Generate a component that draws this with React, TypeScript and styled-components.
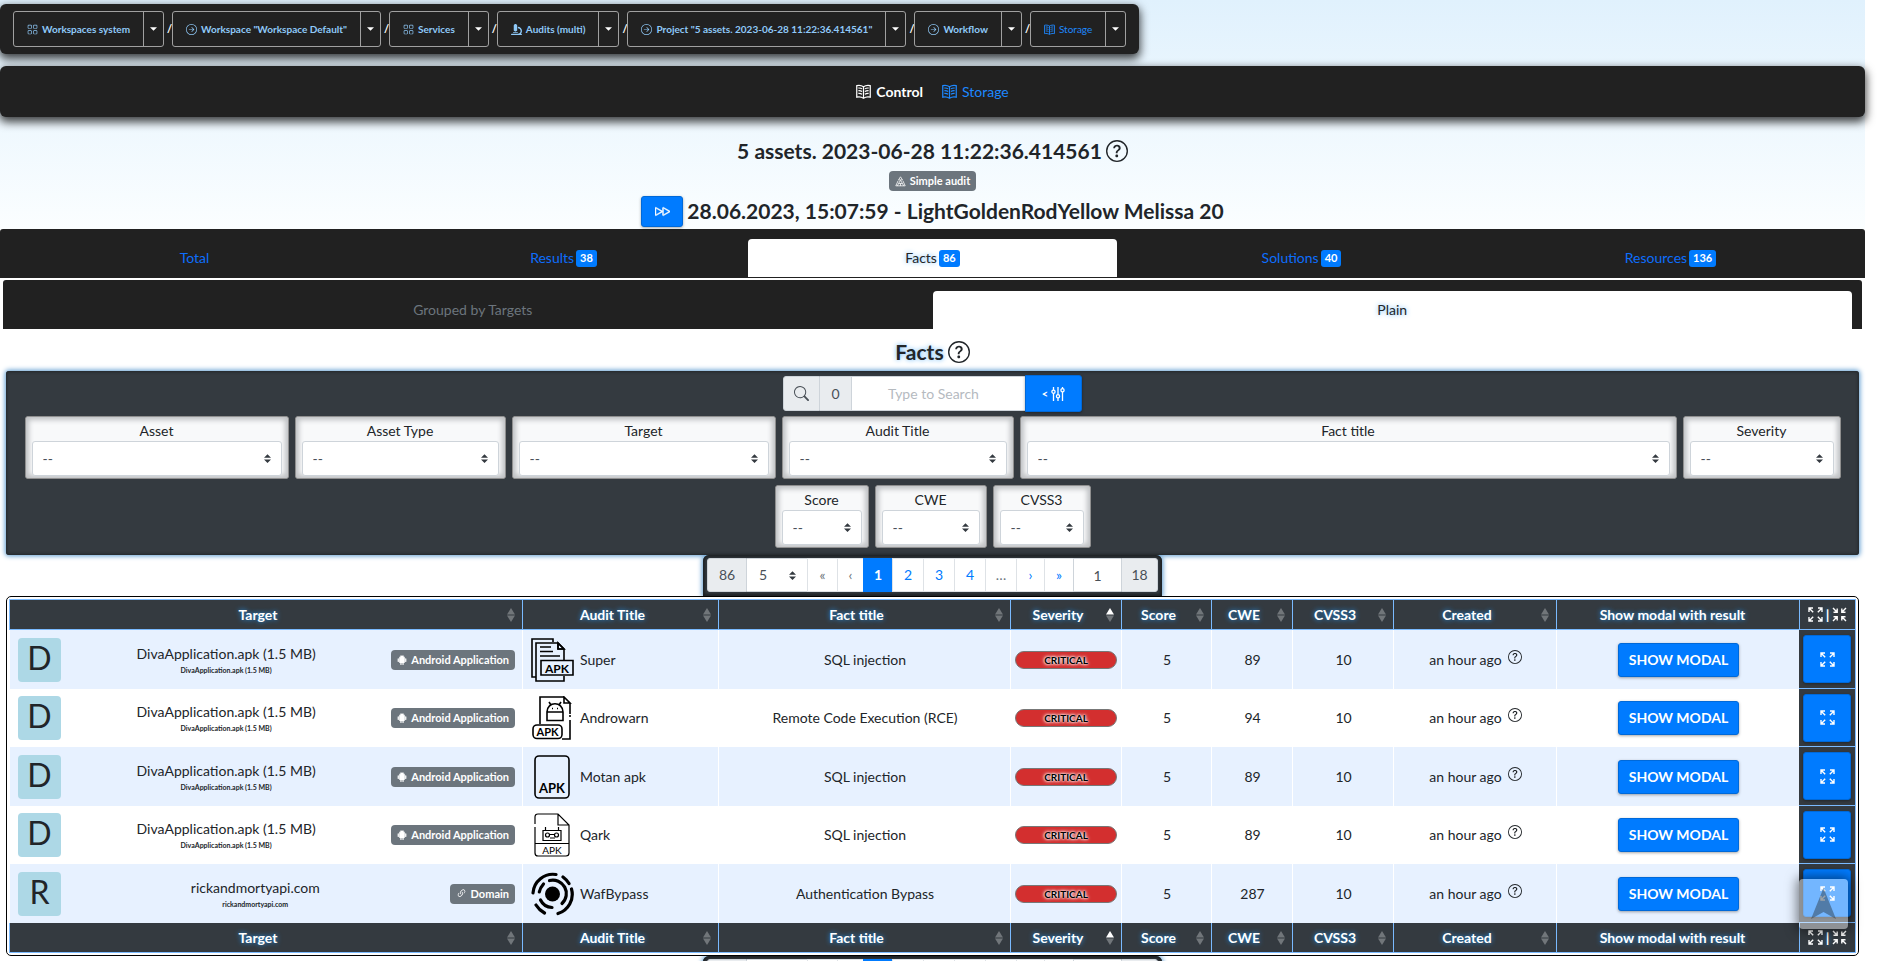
import React from "react";
import styled, { createGlobalStyle, css } from "styled-components";
import {
  BsAndroid2,
  BsArrowRightCircle,
  BsFastForward,
  BsGrid,
  BsLink45Deg,
  BsQuestionCircle,
  BsSearch,
} from "react-icons/bs";
import { FaMicroscope } from "react-icons/fa";

const GlobalStyle = createGlobalStyle`
  *, *::before, *::after { box-sizing: border-box; }
  body {
    margin: 0;
    background: #fff;
    color: #212529;
    font-family: Lato, "Open Sans", sans-serif;
    font-size: 14px;
    line-height: 20px;
  }
  button, input, select { font: inherit; color: inherit; margin: 0; }
  a { text-decoration: none; color: inherit; }
  svg { display: block; flex: none; }
`;

const Shell = styled.div`
  height: 100vh;
  overflow-y: auto;
  scrollbar-width: none;
  padding-right: 12px;
`;

const Top = styled.div`
  padding-top: 4px;
  background: linear-gradient(#e0f1fd, #fbfeff);
`;

const Dark = styled.nav`
  display: flex;
  align-items: center;
  background: #212121;
  border-radius: 6px;
  box-shadow: 0 4px 10px 1px rgba(0, 0, 0, 0.75);
`;

const Crumbs = styled(Dark)`
  width: fit-content;
  height: 50px;
  padding: 0 13px;
  color: #fff;
`;

const Slash = styled.span`
  width: 8px;
  padding-left: 3px;
  font-size: 11px;
  font-weight: 700;
`;

const CrumbGroup = styled.div`
  display: flex;
  height: 36px;
  border: 1px solid #a0a0a0;
  border-radius: 3px;
`;

const CrumbLink = styled.a<{ $current?: boolean }>`
  display: flex;
  align-items: center;
  gap: 4px;
  padding: 0 13px;
  font-size: 10px;
  font-weight: ${(p) => (p.$current ? 400 : 700)};
  color: ${(p) => (p.$current ? "#1e88ff" : "#90caf9")};
`;

const Caret = styled.button`
  width: 20px;
  padding: 0;
  display: flex;
  align-items: center;
  justify-content: center;
  background: none;
  border: 0;
  border-left: 1px solid #a0a0a0;
`;

const ServiceBar = styled(Dark)`
  justify-content: center;
  gap: 19px;
  height: 51px;
  margin-top: 12px;
`;

const ServiceLink = styled.a<{ $current?: boolean }>`
  display: flex;
  align-items: center;
  gap: 5px;
  font-size: 14px;
  font-weight: ${(p) => (p.$current ? 400 : 700)};
  color: ${(p) => (p.$current ? "#1e88ff" : "#fff")};
`;

const Headline = styled.header`
  display: flex;
  flex-direction: column;
  align-items: center;
  gap: 5px;
  padding: 19px 0 3px;
`;

const Title = styled.h1<{ $glow?: boolean }>`
  display: flex;
  align-items: center;
  gap: 4px;
  height: 30px;
  margin: 0;
  font-size: 21px;
  line-height: 30px;
  font-weight: 700;
  ${(p) => p.$glow && css`text-shadow: 0 0 5px #64b5f6;`}
`;

const Tag = styled.span`
  display: inline-flex;
  align-items: center;
  gap: 4px;
  height: 20px;
  padding: 0 6px;
  border-radius: 4px;
  background: #6c757d;
  color: #fff;
  font-size: 11px;
  font-weight: 700;
  white-space: nowrap;
`;

const Primary = styled.button`
  display: inline-flex;
  align-items: center;
  justify-content: center;
  border: 1px solid #0069d9;
  border-radius: 3px;
  background: #007bff;
  color: #fff;
  box-shadow: 0 1px 3px rgba(0, 0, 0, 0.35);
`;

const RunButton = styled(Primary)`
  width: 42px;
  height: 31px;
`;

const Tabs = styled.nav<{ $inner?: boolean }>`
  display: flex;
  margin: ${(p) => (p.$inner ? "2px 3px 0" : "0")};
  padding: ${(p) => (p.$inner ? "11px 10px 0" : "10px 10px 1px")};
  background: #212121;
  border-radius: 3px 3px 0 0;
`;

const Tab = styled.a<{ $active?: boolean; $muted?: boolean }>`
  flex: 1 1 0;
  display: flex;
  align-items: center;
  justify-content: center;
  gap: 2px;
  height: 38px;
  border-radius: 4px 4px 0 0;
  font-size: 14px;
  color: ${(p) => (p.$muted ? "#6c757d" : "#0d6efd")};
  ${(p) =>
    p.$active &&
    css`
      background: #fff;
      color: #212529;
      text-shadow: 0 0 5px #64b5f6;
    `}
`;

const Count = styled.span`
  height: 17px;
  padding: 0 4px;
  border-radius: 3px;
  background: #007bff;
  color: #fff;
  font-size: 11px;
  line-height: 16px;
  font-weight: 700;
  text-shadow: none;
`;

const FactsHead = styled.div`
  display: flex;
  justify-content: center;
  padding: 8px 0 4px;
`;

const FilterPanel = styled.section`
  display: flex;
  flex-direction: column;
  align-items: center;
  gap: 4px;
  margin: 0 6px;
  padding: 4px 8px 7px;
  border-radius: 3px;
  background: #343a40;
  box-shadow: 0 0 5px 1px #5c9bd0, inset 0 0 3px 1px #22272b;
`;

const SearchGroup = styled.div`
  display: flex;
  align-items: center;
  height: 37px;
`;

const Addon = styled.span<{ $w: number; $side?: "left" | "right" }>`
  display: flex;
  align-items: center;
  justify-content: center;
  width: ${(p) => p.$w}px;
  height: 35px;
  background: #e9ecef;
  border: 1px solid #ced4da;
  border-radius: ${(p) =>
    p.$side === "left" ? "3px 0 0 3px" : p.$side === "right" ? "0 3px 3px 0" : "0"};
  color: #495057;
  & + & { border-left: 0; }
`;

const SearchInput = styled.input`
  width: 173px;
  height: 35px;
  padding: 0 20px 0 10px;
  border: 1px solid #ced4da;
  border-width: 1px 0;
  text-align: center;
  background: #fff;
  &::placeholder { color: #b5babf; opacity: 1; }
`;

const FilterToggle = styled(Primary)`
  width: 57px;
  height: 37px;
  gap: 3px;
  border-radius: 0 3px 3px 0;
  font-size: 11px;
  font-weight: 700;
`;

const FilterCards = styled.div`
  display: flex;
  flex-wrap: wrap;
  justify-content: center;
  gap: 6px;
  width: 100%;
`;

const FilterCard = styled.label<{ $w: number }>`
  flex: 0 1 ${(p) => p.$w}px;
  height: 63px;
  padding: 4px 6px 3px;
  border: 1px solid #8f8f8f;
  border-radius: 3px;
  background: #f8f9fa;
  box-shadow: inset 0 0 5px 3px #bfc1c4;
  text-align: center;
`;

const SelectWrap = styled.span<{ $w?: number }>`
  position: relative;
  display: block;
  width: ${(p) => (p.$w ? `${p.$w}px` : "100%")};
  svg {
    position: absolute;
    right: 11px;
    top: 13px;
    pointer-events: none;
  }
`;

const Select = styled.select`
  appearance: none;
  width: 100%;
  height: 35px;
  padding: 0 10px;
  border: 1px solid #ced4da;
  border-radius: 3px;
  background: #fff;
  color: #495057;
`;

const PagerRow = styled.div`
  display: flex;
  justify-content: center;
`;

const PagerBox = styled.nav`
  display: flex;
  padding: 3px 4px 4px;
  border-radius: 6px 6px 0 0;
  background: #343a40;
  box-shadow: 0 0 5px 1px #5c9bd0, inset 0 0 3px 2px #1d2124;
  clip-path: inset(0 -8px 0 -8px);
  ${SelectWrap} select { border-radius: 0; border-width: 1px 0; padding: 0 12px; }
  ${Addon}, ${SelectWrap} select { height: 34px; }
`;

const PageButton = styled.button<{ $w: number; $kind?: "active" | "muted" }>`
  width: ${(p) => p.$w}px;
  height: 34px;
  padding: 0;
  border: 1px solid #dee2e6;
  border-right-width: 0;
  background: #fff;
  color: ${(p) => (p.$kind === "muted" ? "#6c757d" : "#007bff")};
  ${(p) =>
    p.$kind === "active" &&
    css`
      background: #007bff;
      border-color: #007bff;
      color: #fff;
      font-weight: 700;
    `}
`;

const PageInput = styled.input`
  width: 48px;
  height: 34px;
  padding: 0;
  border: 1px solid #ced4da;
  border-right: 0;
  text-align: center;
  color: #495057;
`;

const TableFrame = styled.div`
  position: relative;
  margin: 0 6px;
  padding: 2px;
  border: 1px solid #000;
  border-radius: 5px;
  background: #fff;
`;

const Table = styled.table`
  width: 100%;
  table-layout: fixed;
  border-collapse: separate;
  border-spacing: 0;
`;

const HeadCell = styled.th<{ $plain?: boolean; $foot?: boolean }>`
  height: ${(p) => (p.$foot ? 30 : 31)}px;
  padding: 0 ${(p) => (p.$plain ? 18 : 7)}px 0 7px;
  background: #343a40;
  color: #fff;
  border: 0 solid #7abaff;
  border-left-width: 1px;
  border-bottom-width: 1px;
  border-top-width: ${(p) => (p.$foot ? 0 : 1)}px;
  font-weight: 700;
  text-shadow: 0 0 5px #2196f3;
  white-space: nowrap;
  &:last-child {
    padding: 0;
    border-right-width: 1px;
  }
`;

const HeadInner = styled.div`
  display: flex;
  align-items: center;
  justify-content: center;
  gap: 8px;
  span { flex: 1; }
`;

const ToggleAll = styled.div`
  display: flex;
  align-items: center;
  justify-content: center;
  gap: 3px;
`;

const Row = styled.tr`
  height: 59px;
  background: #e7f1ff;
  &:nth-child(even) { height: 58px; background: #fff; }
`;

const Cell = styled.td`
  padding: 0 7px 0 8px;
  border-left: 1px solid #fff;
  text-align: center;
`;

const TargetInner = styled.div`
  display: flex;
  align-items: center;
`;

const Avatar = styled.span`
  width: 43px;
  height: 44px;
  border-radius: 4px;
  background: #add8e6;
  font-size: 32px;
  line-height: 40px;
  text-align: center;
`;

const TargetText = styled.div`
  flex: 1;
  small {
    display: block;
    font-size: 7px;
    line-height: 12px;
    font-weight: 700;
  }
`;

const AuditInner = styled.div`
  display: flex;
  align-items: center;
  gap: 6px;
`;

const Severity = styled.span`
  display: block;
  height: 18px;
  margin: 0 -3px 0 -4px;
  border: 1px solid #777;
  border-radius: 9px;
  background: #d32f2f;
  color: #000;
  font-size: 10px;
  line-height: 16px;
  font-weight: 700;
  text-shadow: 0 0 2px #fff, 0 0 3px #fff, 0 0 4px #fff;
`;

const Created = styled.span`
  display: inline-flex;
  gap: 6px;
`;

const ModalButton = styled(Primary)`
  width: 121px;
  height: 34px;
  font-weight: 700;
`;

const ExpandCell = styled.td`
  padding: 0 4px;
  background: #343a40;
  border-right: 1px solid #7abaff;
  border-bottom: 1px solid #7abaff;
`;

const ExpandButton = styled(Primary)`
  width: 100%;
  height: 48px;
`;

const ScrollTop = styled.button`
  position: fixed;
  right: 29px;
  bottom: 32px;
  width: 49px;
  height: 50px;
  display: flex;
  align-items: center;
  justify-content: center;
  padding: 0;
  border: 0;
  border-radius: 4px;
  background: rgba(255, 255, 255, 0.45);
  box-shadow: 0 0 12px 2px rgba(0, 0, 0, 0.5);
`;

const BookIcon = ({ size }: { size: number }) => (
  <svg width={size} height={size} viewBox="0 0 16 16" fill="none" stroke="currentColor" strokeWidth="1.300">
    <path d="M8 3C6 1.600 3 1.300 0.800 1.800V14C3 13.500 6 13.800 8 15.200C10 13.800 13 13.500 15.200 14V1.800C13 1.300 10 1.600 8 3Z" />
    <path d="M8 3V15M2.500 4.300C4 4.200 5.500 4.500 6.500 5.200M2.500 7.200C4 7.100 5.500 7.400 6.500 8.100M2.500 10.100C4 10 5.500 10.300 6.500 11M13.500 4.300C12 4.200 10.500 4.500 9.500 5.200M13.500 7.200C12 7.100 10.500 7.400 9.500 8.100M13.500 10.100C12 10 10.500 10.300 9.500 11" />
  </svg>
);

const DownCaret = () => (
  <svg width="7" height="4" viewBox="0 0 8 4" fill="#fff">
    <path d="M0 0H8L4 4Z" />
  </svg>
);

const SelectArrow = () => (
  <svg width="7" height="9" viewBox="0 0 8 10" fill="#343a40">
    <path d="M4 0L8 4H0ZM4 10L0 6H8Z" />
  </svg>
);

const SortIcon = ({ asc }: { asc?: boolean }) => (
  <svg width="8" height="14" viewBox="0 0 8 14">
    <path d="M4 0L8 6.500H0Z" fill={asc ? "#fff" : "#71767a"} />
    <path d="M4 14L0 7.500H8Z" fill="#71767a" />
  </svg>
);

const SlidersIcon = () => (
  <svg width="14" height="14" viewBox="0 0 14 14" fill="none" stroke="currentColor" strokeWidth="1.300">
    <path d="M2.500 0V3M2.500 6.500V14M7 0V7.500M7 11V14M11.500 0V1.500M11.500 5V14" />
    <circle cx="2.500" cy="4.700" r="1.600" />
    <circle cx="7" cy="9.300" r="1.600" />
    <circle cx="11.500" cy="3.200" r="1.600" />
  </svg>
);

const PyramidIcon = () => (
  <svg width="11" height="11" viewBox="0 0 14 14" fill="none" stroke="currentColor" strokeWidth="1">
    <path d="M7 1L4.500 5H9.500ZM4 6L1 12.500H13L10 6M7 5.500L4.500 9.500H9.500ZM4.500 9.500L3 12.500M9.500 9.500L11 12.500M7 9.500V12.500" />
  </svg>
);

const ExpandIcon = () => (
  <svg width="15" height="15" viewBox="0 0 15 15" fill="none" stroke="currentColor" strokeWidth="1.400">
    <path d="M1 5V1H5M1 1L5.200 5.200M10 1H14V5M14 1L9.800 5.200M1 10V14H5M1 14L5.200 9.800M14 10V14H10M14 14L9.800 9.800" />
  </svg>
);

const CollapseIcon = () => (
  <svg width="15" height="15" viewBox="0 0 15 15" fill="none" stroke="currentColor" strokeWidth="1.400">
    <path d="M5.200 1.500V5.200H1.500M5.200 5.200L1 1M9.800 1.500V5.200H13.500M9.800 5.200L14 1M5.200 13.500V9.800H1.500M5.200 9.800L1 14M9.800 13.500V9.800H13.500M9.800 9.800L14 14" />
  </svg>
);

const NavArrow = () => (
  <svg width="25" height="50" viewBox="0 0 25 50" fill="rgba(40,50,60,0.45)">
    <path d="M12.500 9L25 40L12.500 33L0 40Z" />
  </svg>
);

type Audit = "super" | "androwarn" | "motan" | "qark" | "waf";

const ApkText = ({ x, y, size, bold }: { x: number; y: number; size: number; bold?: boolean }) => (
  <text x={x} y={y} fontSize={size} fontWeight={bold ? 700 : 400} textAnchor="middle" fill="#000" stroke="none">
    APK
  </text>
);

const AuditIcon = ({ kind }: { kind: Audit }) => (
  <svg width="43" height="44" viewBox="0 0 43 44" fill="none" stroke="#000" strokeWidth="1.600">
    {kind === "super" && (
      <>
        <path d="M5 39H1V1H22V4M33 38V43H5V5H27L33 11V22M27 5V11H33" />
        <path d="M9 9H20M9 13.500H22M9 18H29M27 5V11H33Z" />
        <path d="M10 22.500H42V37H10Z" />
        <ApkText x={26} y={34.5} size={12} bold />
      </>
    )}
    {kind === "androwarn" && (
      <>
        <path d="M9 28V1H33L39 7V18M39 24V43H31M33 1V7H39Z" />
        <path d="M39 19V21" />
        <path d="M16 16C16 5 32 5 32 16V24.500H16V16H32M18 6L20 9M30 6L28 9" />
        <path d="M21 12.500H22M26 12.500H27" />
        <rect x="2" y="29" width="29" height="13.500" rx="4" />
        <ApkText x={16.5} y={40} size={11} bold />
      </>
    )}
    {kind === "motan" && (
      <>
        <rect x="4" y="1" width="34" height="42" rx="4" />
        <ApkText x={21} y={38} size={13} bold />
      </>
    )}
    {kind === "qark" && (
      <g strokeWidth="1.200">
        <path d="M4 11V4Q4 1 7 1H27L38 12V40Q38 43 35 43H7Q4 43 4 40V14M27 1V12H38M4 30.500H38" />
        <path d="M12 17.500H30V27.500H12ZM14.500 14V17.500M27.500 14V17.500M18.500 21.500H23.500M19 25H24" />
        <circle cx="16.500" cy="22" r="2" />
        <circle cx="25.500" cy="22" r="2" />
        <ApkText x={21} y={40.5} size={10} />
      </g>
    )}
    {kind === "waf" && (
      <g strokeWidth="3.200" strokeLinecap="round">
        <circle cx="21.500" cy="22" r="7.500" fill="#000" stroke="none" />
        <path d="M18.500 8.500A13.500 13.500 0 0 1 31 31.500M12.500 12Q9 16 8.300 20M9.500 28A13.500 13.500 0 0 0 21 35.500" />
        <path d="M2 21A20 20 0 0 1 25 2.500M32 5Q36 8 38 11.500M40.500 17A20 20 0 0 1 27 41.500M5 33Q8 38 13.500 41" />
      </g>
    )}
  </svg>
);

type CrumbIcon = "grid" | "arrow" | "micro" | "book";
const crumbs: { icon: CrumbIcon; text: string }[] = [
  { icon: "grid", text: "Workspaces system" },
  { icon: "arrow", text: 'Workspace "Workspace Default"' },
  { icon: "grid", text: "Services" },
  { icon: "micro", text: "Audits (multi)" },
  { icon: "arrow", text: 'Project "5 assets. 2023-06-28 11:22:36.414561"' },
  { icon: "arrow", text: "Workflow" },
  { icon: "book", text: "Storage" },
];

const crumbIcons: Record<CrumbIcon, React.ReactNode> = {
  grid: <BsGrid size={11} />,
  arrow: <BsArrowRightCircle size={11} />,
  micro: <FaMicroscope size={11} />,
  book: <BookIcon size={11} />,
};

const tabs = [
  { text: "Total" },
  { text: "Results", count: 38 },
  { text: "Facts", count: 86, active: true },
  { text: "Solutions", count: 40 },
  { text: "Resources", count: 136 },
];

const filters = [
  { text: "Asset", w: 264 },
  { text: "Asset Type", w: 211 },
  { text: "Target", w: 264 },
  { text: "Audit Title", w: 232 },
  { text: "Fact title", w: 657 },
  { text: "Severity", w: 158 },
  { text: "Score", w: 94 },
  { text: "CWE", w: 112 },
  { text: "CVSS3", w: 98 },
];

const columns: { text: string; w: number; asc?: boolean; plain?: boolean }[] = [
  { text: "Target", w: 513 },
  { text: "Audit Title", w: 196 },
  { text: "Fact title", w: 292 },
  { text: "Severity", w: 111, asc: true },
  { text: "Score", w: 90 },
  { text: "CWE", w: 81 },
  { text: "CVSS3", w: 101 },
  { text: "Created", w: 163 },
  { text: "Show modal with result", w: 243, plain: true },
];

const apk = "DivaApplication.apk (1.5 MB)";
const rows: { target: string; domain?: boolean; icon: Audit; audit: string; fact: string; cwe: number }[] = [
  { target: apk, icon: "super", audit: "Super", fact: "SQL injection", cwe: 89 },
  { target: apk, icon: "androwarn", audit: "Androwarn", fact: "Remote Code Execution (RCE)", cwe: 94 },
  { target: apk, icon: "motan", audit: "Motan apk", fact: "SQL injection", cwe: 89 },
  { target: apk, icon: "qark", audit: "Qark", fact: "SQL injection", cwe: 89 },
  { target: "rickandmortyapi.com", domain: true, icon: "waf", audit: "WafBypass", fact: "Authentication Bypass", cwe: 287 },
];

const pageButtons: { text: string; w: number; kind?: "active" | "muted" }[] = [
  { text: "«", w: 30, kind: "muted" },
  { text: "‹", w: 26, kind: "muted" },
  { text: "1", w: 29, kind: "active" },
  { text: "2", w: 31 },
  { text: "3", w: 31 },
  { text: "4", w: 31 },
  { text: "…", w: 31, kind: "muted" },
  { text: "›", w: 28 },
  { text: "»", w: 29 },
];

const Pager = () => (
  <PagerRow>
    <PagerBox aria-label="Pages">
      <Addon $w={40} $side="left">86</Addon>
      <SelectWrap $w={60}>
        <Select aria-label="Rows per page" defaultValue="5">
          <option>5</option>
          <option>10</option>
        </Select>
        <SelectArrow />
      </SelectWrap>
      {pageButtons.map((b) => (
        <PageButton key={b.text} $w={b.w} $kind={b.kind}>{b.text}</PageButton>
      ))}
      <PageInput aria-label="Page number" defaultValue="1" />
      <Addon $w={37} $side="right">18</Addon>
    </PagerBox>
  </PagerRow>
);

const HeadRow = ({ foot }: { foot?: boolean }) => (
  <tr>
    {columns.map((c) => (
      <HeadCell key={c.text} $plain={c.plain} $foot={foot} scope="col" aria-sort={c.asc ? "ascending" : undefined}>
        <HeadInner>
          <span>{c.text}</span>
          {!c.plain && <SortIcon asc={c.asc} />}
        </HeadInner>
      </HeadCell>
    ))}
    <HeadCell $foot={foot} scope="col">
      <ToggleAll>
        <ExpandIcon />
        <span>|</span>
        <CollapseIcon />
      </ToggleAll>
    </HeadCell>
  </tr>
);

export default function App() {
  return (
    <Shell>
      <GlobalStyle />
      <Top>
        <Crumbs aria-label="Breadcrumb">
          {crumbs.map((c, i) => (
            <React.Fragment key={c.text}>
              {i > 0 && <Slash>/</Slash>}
              <CrumbGroup>
                <CrumbLink href="#" $current={i === crumbs.length - 1}>
                  {crumbIcons[c.icon]}
                  {c.text}
                </CrumbLink>
                <Caret aria-label={`More for ${c.text}`}>
                  <DownCaret />
                </Caret>
              </CrumbGroup>
            </React.Fragment>
          ))}
        </Crumbs>
        <ServiceBar aria-label="Section">
          <ServiceLink href="#"><BookIcon size={15} />Control</ServiceLink>
          <ServiceLink href="#" $current><BookIcon size={15} />Storage</ServiceLink>
        </ServiceBar>
        <Headline>
          <Title>
            5 assets. 2023-06-28 11:22:36.414561
            <BsQuestionCircle size={22} />
          </Title>
          <Tag><PyramidIcon />Simple audit</Tag>
          <Title as="h2">
            <RunButton aria-label="Run again">
              <BsFastForward size={15} stroke="currentColor" strokeWidth={0.5} />
            </RunButton>
            28.06.2023, 15:07:59 - LightGoldenRodYellow Melissa 20
          </Title>
        </Headline>
      </Top>
      <Tabs aria-label="Views">
        {tabs.map((t) => (
          <Tab key={t.text} href="#" $active={t.active}>
            {t.text}
            {t.count !== undefined && <Count>{t.count}</Count>}
          </Tab>
        ))}
      </Tabs>
      <Tabs $inner aria-label="Grouping">
        <Tab href="#" $muted>Grouped by Targets</Tab>
        <Tab href="#" $active>Plain</Tab>
      </Tabs>
      <FactsHead>
        <Title as="h3" $glow>
          Facts
          <BsQuestionCircle size={22} />
        </Title>
      </FactsHead>
      <FilterPanel aria-label="Filters">
        <SearchGroup>
          <Addon $w={37} $side="left"><BsSearch size={15} /></Addon>
          <Addon $w={32}>0</Addon>
          <SearchInput aria-label="Search" placeholder="Type to Search" />
          <FilterToggle aria-label="Toggle filters">&lt; <SlidersIcon /></FilterToggle>
        </SearchGroup>
        <FilterCards>
          {filters.map((f) => (
            <FilterCard key={f.text} $w={f.w}>
              {f.text}
              <SelectWrap>
                <Select defaultValue="--"><option>--</option></Select>
                <SelectArrow />
              </SelectWrap>
            </FilterCard>
          ))}
        </FilterCards>
      </FilterPanel>
      <Pager />
      <TableFrame>
        <Table>
          <colgroup>
            {columns.map((c) => <col key={c.text} style={{ width: c.w }} />)}
            <col style={{ width: 57 }} />
          </colgroup>
          <thead><HeadRow /></thead>
          <tbody>
            {rows.map((r) => (
              <Row key={r.audit}>
                <Cell>
                  <TargetInner>
                    <Avatar>{r.domain ? "R" : "D"}</Avatar>
                    <TargetText>
                      {r.target}
                      <small>{r.target}</small>
                    </TargetText>
                    <Tag>
                      {r.domain ? <BsLink45Deg size={11} /> : <BsAndroid2 size={10} />}
                      {r.domain ? "Domain" : "Android Application"}
                    </Tag>
                  </TargetInner>
                </Cell>
                <Cell>
                  <AuditInner>
                    <AuditIcon kind={r.icon} />
                    {r.audit}
                  </AuditInner>
                </Cell>
                <Cell>{r.fact}</Cell>
                <Cell><Severity>CRITICAL</Severity></Cell>
                <Cell>5</Cell>
                <Cell>{r.cwe}</Cell>
                <Cell>10</Cell>
                <Cell>
                  <Created>an hour ago <BsQuestionCircle size={14} /></Created>
                </Cell>
                <Cell><ModalButton>SHOW MODAL</ModalButton></Cell>
                <ExpandCell>
                  <ExpandButton aria-label={`Expand ${r.audit}`}><ExpandIcon /></ExpandButton>
                </ExpandCell>
              </Row>
            ))}
          </tbody>
          <tfoot><HeadRow foot /></tfoot>
        </Table>
      </TableFrame>
      <Pager />
      <ScrollTop aria-label="Back to top"><NavArrow /></ScrollTop>
    </Shell>
  );
}
